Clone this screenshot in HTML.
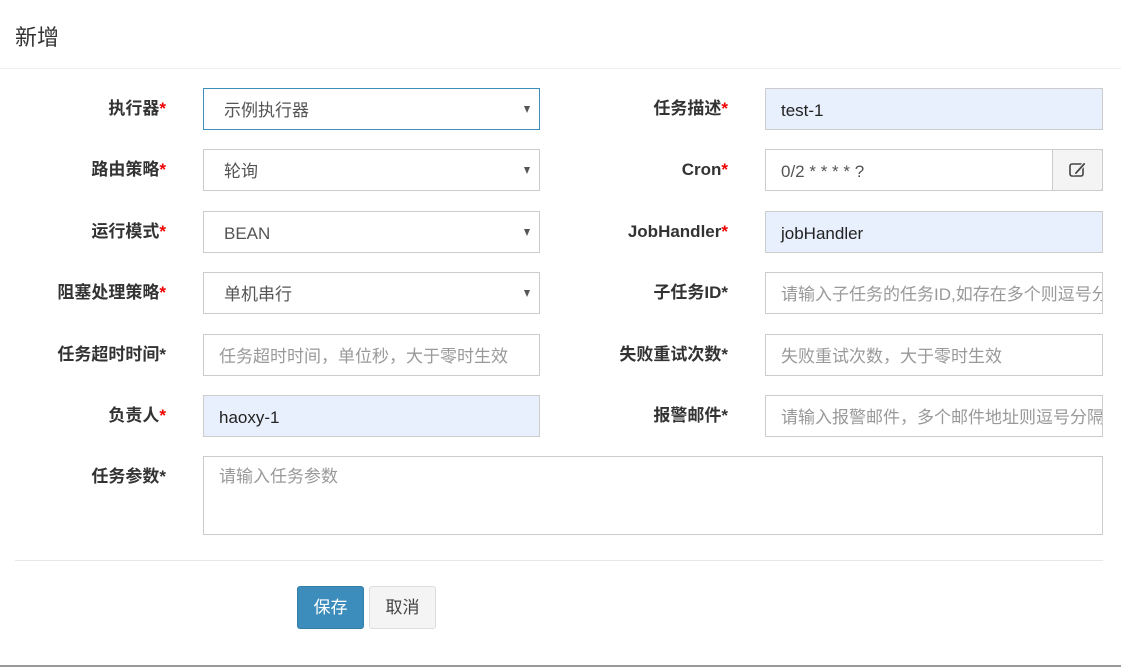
<!DOCTYPE html>
<html><head><meta charset="utf-8"><style>
*{box-sizing:border-box;margin:0;padding:0}
body{width:1121px;height:667px;background:#fff;font-family:"Liberation Sans","Noto Sans CJK SC",sans-serif;position:relative;overflow:hidden;color:#333}
.h{position:absolute;left:15px;top:20px;font-size:22px;color:#333}
.sep{position:absolute;left:0;right:0;top:68px;border-top:1px solid #eee}
.lab{position:absolute;font-size:17px;font-weight:bold;text-align:right;color:#333;line-height:42px}
.lab i{color:#e00;font-style:normal}
.in{position:absolute;height:42px;border:1px solid #ccc;font-size:17px;line-height:43px;padding-left:20px;color:#555;white-space:nowrap;overflow:hidden}
.ph{color:#999;padding-left:15px}
.af{background:#e8f0fe;color:#222;padding-left:15px}
.sel::after{content:"";position:absolute;right:9px;top:17px;border-left:3.5px solid transparent;border-right:3.5px solid transparent;border-top:7px solid #555}
.btn{position:absolute;top:586px;height:43px;width:67px;border-radius:3px;font-size:17px;line-height:41px;text-align:center}
</style></head><body>
<div class="h">新增</div>
<div class="sep"></div>

<div class="lab" style="right:955px;top:88px">执行器<i>*</i></div>
<div class="in sel" style="left:203px;top:88px;width:337px;border-color:#3c8dbc">示例执行器</div>
<div class="lab" style="right:393px;top:88px">任务描述<i>*</i></div>
<div class="in af" style="left:765px;top:88px;width:338px">test-1</div>

<div class="lab" style="right:955px;top:149px">路由策略<i>*</i></div>
<div class="in sel" style="left:203px;top:149px;width:337px">轮询</div>
<div class="lab" style="right:393px;top:149px">Cron<i>*</i></div>
<div class="in" style="left:765px;top:149px;width:338px;padding-left:15px;background:#fff">0/2 * * * * ?</div>
<div style="position:absolute;left:1052px;top:149px;width:51px;height:42px;background:#f4f4f4;border:1px solid #ccc;border-radius:0 3px 3px 0">
<svg width="50" height="40" viewBox="0 0 50 40"><rect x="17" y="14" width="13" height="12" rx="2" fill="none" stroke="#444" stroke-width="1.6"/><path d="M22 22 L31 12 L33 14 L24 24 L21 25Z" fill="#444" stroke="#f4f4f4" stroke-width="1"/></svg></div>

<div class="lab" style="right:955px;top:211px">运行模式<i>*</i></div>
<div class="in sel" style="left:203px;top:211px;width:337px">BEAN</div>
<div class="lab" style="right:393px;top:211px">JobHandler<i>*</i></div>
<div class="in af" style="left:765px;top:211px;width:338px">jobHandler</div>

<div class="lab" style="right:955px;top:272px">阻塞处理策略<i>*</i></div>
<div class="in sel" style="left:203px;top:272px;width:337px">单机串行</div>
<div class="lab" style="right:393px;top:272px">子任务ID*</div>
<div class="in ph" style="left:765px;top:272px;width:338px">请输入子任务的任务ID,如存在多个则逗号分隔</div>

<div class="lab" style="right:955px;top:334px">任务超时时间*</div>
<div class="in ph" style="left:203px;top:334px;width:337px">任务超时时间，单位秒，大于零时生效</div>
<div class="lab" style="right:393px;top:334px">失败重试次数*</div>
<div class="in ph" style="left:765px;top:334px;width:338px">失败重试次数，大于零时生效</div>

<div class="lab" style="right:955px;top:395px">负责人<i>*</i></div>
<div class="in af" style="left:203px;top:395px;width:337px">haoxy-1</div>
<div class="lab" style="right:393px;top:395px">报警邮件*</div>
<div class="in ph" style="left:765px;top:395px;width:338px">请输入报警邮件，多个邮件地址则逗号分隔</div>

<div class="lab" style="right:955px;top:456px">任务参数*</div>
<div class="in ph" style="left:203px;top:456px;width:900px;height:79px;line-height:40px">请输入任务参数</div>

<div style="position:absolute;left:15px;width:1088px;top:560px;border-top:1px solid #e8e8e8"></div>
<div class="btn" style="left:297px;background:#3c8dbc;border:1px solid #367fa9;color:#fff">保存</div>
<div class="btn" style="left:369px;background:#f4f4f4;border:1px solid #ddd;color:#444">取消</div>
<div style="position:absolute;left:0;right:0;top:665px;height:2px;background:#999"></div>
</body></html>
